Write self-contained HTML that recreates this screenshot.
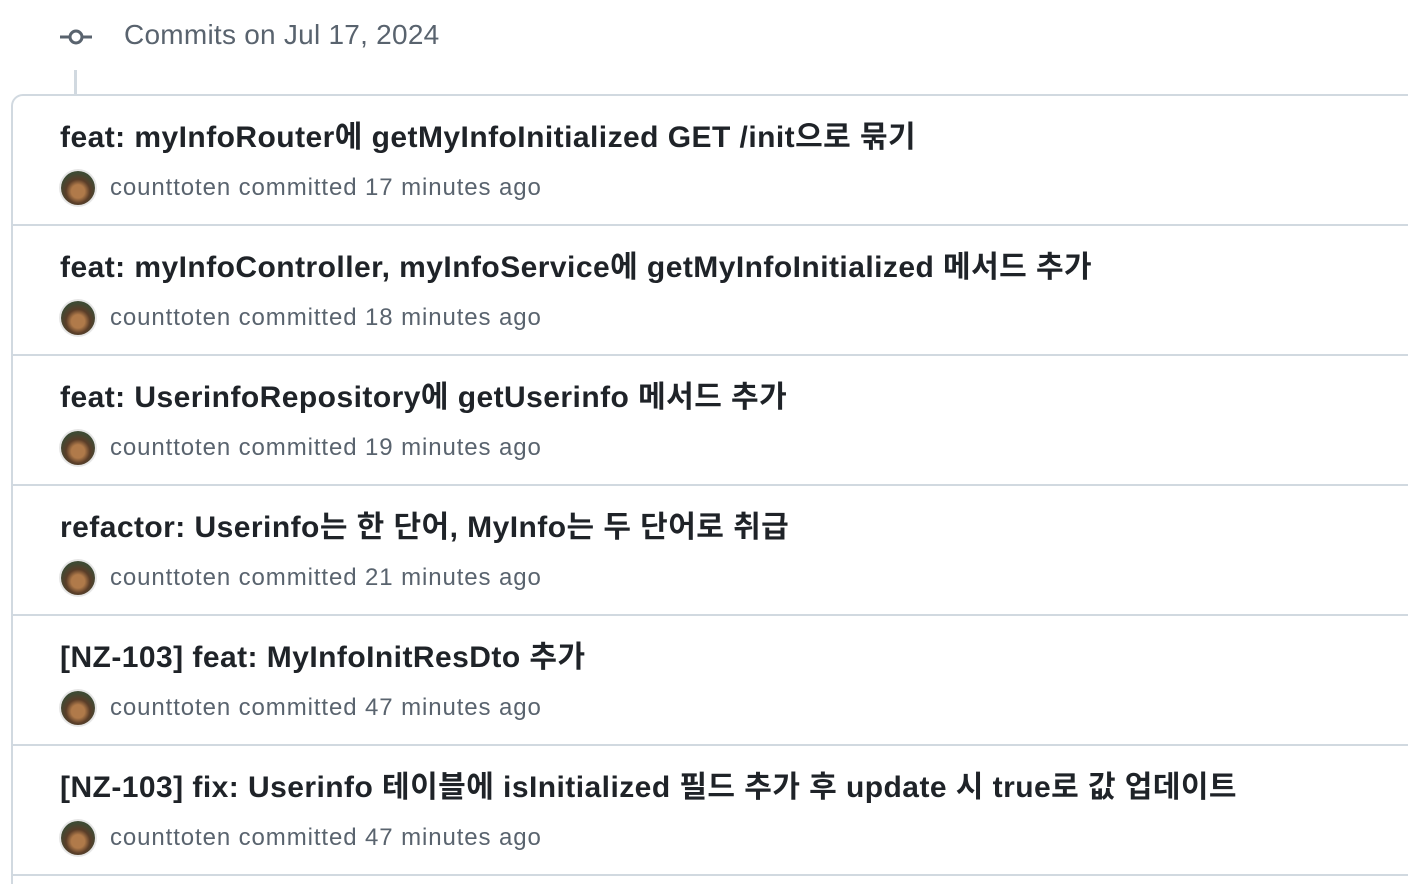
<!DOCTYPE html>
<html><head><meta charset="utf-8"><style>
html,body{margin:0;width:1408px;height:884px;overflow:hidden}
body{background:#fff;font-family:"Liberation Sans","Noto Sans CJK KR",sans-serif;position:relative}
.hdr{position:absolute;left:124px;top:17px;font-size:28px;color:#59636e;line-height:36px;letter-spacing:0.25px}
.vl{position:absolute;left:74px;top:70px;width:3px;height:26px;background:#d1d9e0}
.box{position:absolute;left:11px;top:94px;width:1420px;height:820px;border:2px solid #d1d9e0;border-radius:12px;box-sizing:border-box}
.row{position:absolute;left:11px;width:1400px;height:130px;border-bottom:2px solid #d1d9e0;box-sizing:border-box}
.t{position:absolute;left:49px;top:16px;font-size:30px;color:#1f2328;font-weight:bold;white-space:nowrap;letter-spacing:0.45px}
.m{position:absolute;left:99px;top:78px;font-size:24px;color:#59636e;white-space:nowrap;letter-spacing:0.9px}
.av{position:absolute;left:50px;top:75px;width:34px;height:34px;border-radius:50%;background:radial-gradient(circle at 50% 60%,#b07a4a 0 25%,#5a3d28 45%,#3e4a34 70%);box-shadow:0 0 0 2px #e6e6e6}
</style></head><body>
<svg style="position:absolute;left:58px;top:26px" width="36" height="22" viewBox="0 0 36 22"><line x1="2" y1="11" x2="11" y2="11" stroke="#59636e" stroke-width="3"/><circle cx="18" cy="11" r="6" fill="none" stroke="#59636e" stroke-width="3"/><line x1="25" y1="11" x2="34" y2="11" stroke="#59636e" stroke-width="3"/></svg>
<div class="hdr">Commits on Jul 17, 2024</div>
<div class="vl"></div>
<div class="box"></div>
<div class="row" style="top:96px"><div class="t">feat: myInfoRouter에 getMyInfoInitialized GET /init으로 묶기</div><div class="av"></div><div class="m">counttoten committed 17 minutes ago</div></div>
<div class="row" style="top:226px"><div class="t">feat: myInfoController, myInfoService에 getMyInfoInitialized 메서드 추가</div><div class="av"></div><div class="m">counttoten committed 18 minutes ago</div></div>
<div class="row" style="top:356px"><div class="t">feat: UserinfoRepository에 getUserinfo 메서드 추가</div><div class="av"></div><div class="m">counttoten committed 19 minutes ago</div></div>
<div class="row" style="top:486px"><div class="t">refactor: Userinfo는 한 단어, MyInfo는 두 단어로 취급</div><div class="av"></div><div class="m">counttoten committed 21 minutes ago</div></div>
<div class="row" style="top:616px"><div class="t">[NZ-103] feat: MyInfoInitResDto 추가</div><div class="av"></div><div class="m">counttoten committed 47 minutes ago</div></div>
<div class="row" style="top:746px"><div class="t">[NZ-103] fix: Userinfo 테이블에 isInitialized 필드 추가 후 update 시 true로 값 업데이트</div><div class="av"></div><div class="m">counttoten committed 47 minutes ago</div></div>
</body></html>
